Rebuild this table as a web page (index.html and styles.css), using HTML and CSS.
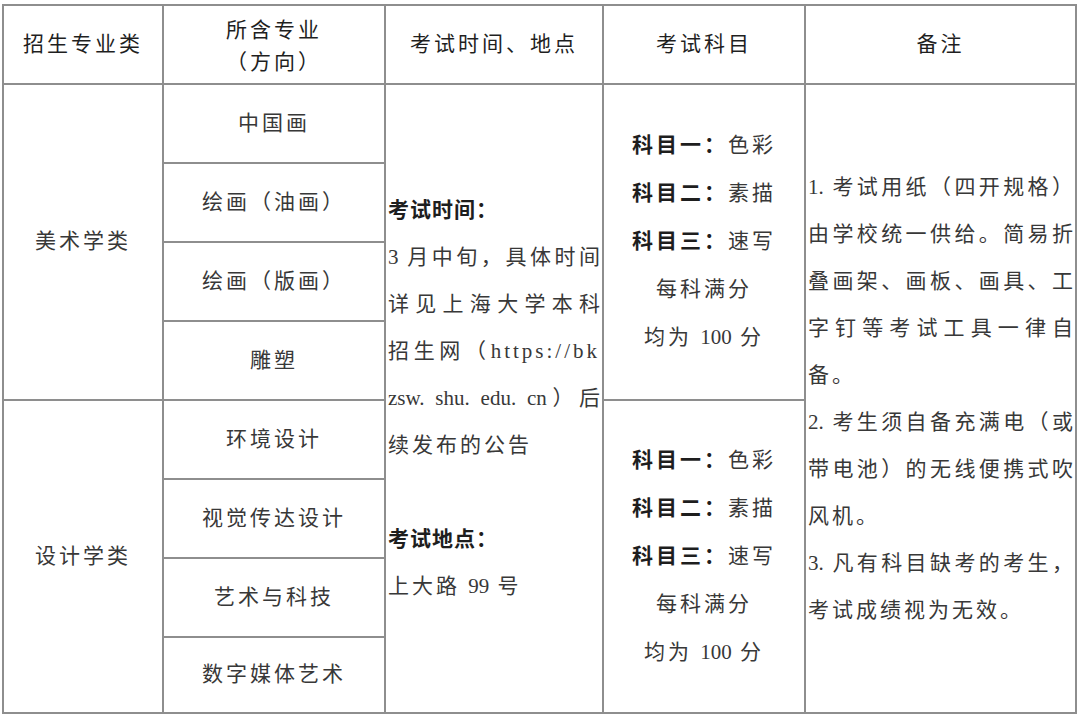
FILE: index.html
```html
<!DOCTYPE html>
<html lang="zh-CN">
<head>
<meta charset="utf-8">
<title>招生专业考试安排</title>
<link rel="stylesheet" href="styles.css">
</head>
<body>
<div class="sheet">
  <div class="cell head">招生专业类</div>
  <div class="cell head two">所含专业<br>（方向）</div>
  <div class="cell head">考试时间、地点</div>
  <div class="cell head">考试科目</div>
  <div class="cell head">备注</div>

  <div class="cell span4">美术学类</div>
  <div class="cell">中国画</div>
  <div class="cell span8 info">
    <div class="label">考试时间：</div>
    <div class="jl">3 月中旬，具体时间</div>
    <div class="jl">详见上海大学本科</div>
    <div class="jl spaced">招生网（https://bk</div>
    <div class="jl">zsw. shu. edu. cn）后</div>
    <div class="line">续发布的公告</div>
    <div class="line">&nbsp;</div>
    <div class="label">考试地点：</div>
    <div class="line">上大路 <span class="num">99</span> 号</div>
  </div>
  <div class="cell span4 subjects">
    <div class="line"><b>科目一：</b>色彩</div>
    <div class="line"><b>科目二：</b>素描</div>
    <div class="line"><b>科目三：</b>速写</div>
    <div class="line">每科满分</div>
    <div class="line">均为 <span class="num">100</span> 分</div>
  </div>
  <div class="cell span8 notes">
    <div class="jl">1. 考试用纸（四开规格）</div>
    <div class="jl">由学校统一供给。简易折</div>
    <div class="jl">叠画架、画板、画具、工</div>
    <div class="jl">字钉等考试工具一律自</div>
    <div class="line">备。</div>
    <div class="jl">2. 考生须自备充满电（或</div>
    <div class="jl">带电池）的无线便携式吹</div>
    <div class="line">风机。</div>
    <div class="jl">3. 凡有科目缺考的考生，</div>
    <div class="line">考试成绩视为无效。</div>
  </div>
  <div class="cell">绘画（油画）</div>
  <div class="cell">绘画（版画）</div>
  <div class="cell">雕塑</div>

  <div class="cell span4">设计学类</div>
  <div class="cell">环境设计</div>
  <div class="cell span4 subjects">
    <div class="line"><b>科目一：</b>色彩</div>
    <div class="line"><b>科目二：</b>素描</div>
    <div class="line"><b>科目三：</b>速写</div>
    <div class="line">每科满分</div>
    <div class="line">均为 <span class="num">100</span> 分</div>
  </div>
  <div class="cell">视觉传达设计</div>
  <div class="cell">艺术与科技</div>
  <div class="cell">数字媒体艺术</div>
</div>
</body>
</html>
```

FILE: styles.css
```css
html, body {
  margin: 0;
  background: #ffffff;
}

body {
  padding: 4px 0 0 2px;
  font-family: "Liberation Serif", "Noto Sans CJK SC", serif;
  font-size: 21px;
  color: #383838;
}

.sheet {
  display: grid;
  grid-template-columns: 160px 222px 218px 202px 271px;
  grid-template-rows: 79px repeat(7, 79px) 76px;
  width: max-content;
  border-left: 2px solid #8e8e8e;
  border-top: 2px solid #8e8e8e;
}

.cell {
  box-sizing: border-box;
  border-right: 2px solid #8e8e8e;
  border-bottom: 2px solid #8e8e8e;
  display: flex;
  align-items: center;
  justify-content: center;
  text-align: center;
  letter-spacing: 3px;
  line-height: 1.2;
}

.head {
  color: #1f1f1f;
}

.head.two {
  line-height: 32px;
  padding-top: 2px;
}

.span4 {
  grid-row: span 4;
}

.span8 {
  grid-row: span 8;
}

.info,
.notes {
  flex-direction: column;
  align-items: stretch;
  justify-content: center;
  text-align: left;
  line-height: 47px;
}

.info {
  padding: 0 2px 0 2px;
}

.notes {
  padding: 0 2px 0 2px;
}

.subjects {
  flex-direction: column;
  line-height: 48px;
  padding-bottom: 2px;
}

.label {
  font-weight: 700;
  color: #1e1e1e;
  letter-spacing: 1px;
}

.subjects b {
  font-weight: 700;
  color: #1e1e1e;
}

.num {
  letter-spacing: 0;
}

.jl {
  letter-spacing: 0;
  text-align: justify;
  text-align-last: justify;
}

.jl.spaced {
  letter-spacing: 3px;
}

.line {
  white-space: nowrap;
}
```
